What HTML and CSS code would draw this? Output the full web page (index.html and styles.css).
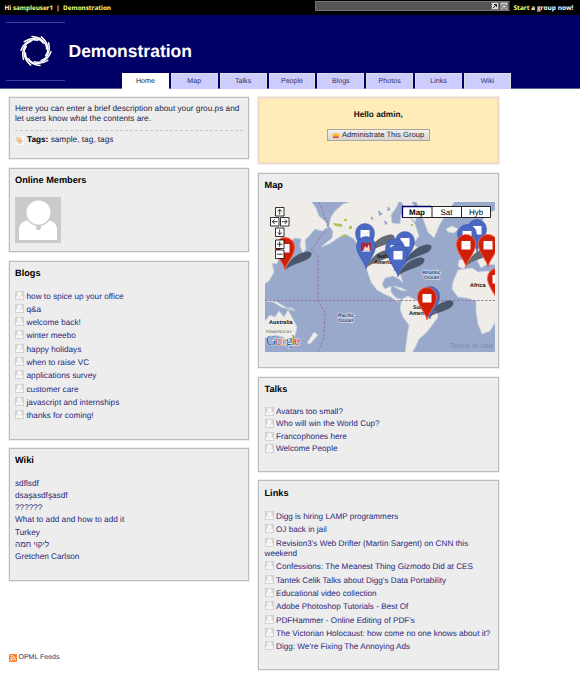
FILE: index.html
```html
<!DOCTYPE html>
<html lang="en">
<head>
<meta charset="utf-8">
<title>Demonstration</title>
<link rel="stylesheet" href="styles.css">
</head>
<body>
<svg width="0" height="0" class="defs">
  <defs>
    <symbol id="person" viewBox="0 0 46 46">
      <rect width="46" height="46" fill="#cbcbcb"/>
      <path d="M4 43V31q1-6 9-8l10 7 10-7q8 2 9 8v12z" fill="#fff"/>
      <circle cx="23.500" cy="15.500" r="13.500" fill="#cbcbcb"/>
      <circle cx="23.500" cy="15.500" r="12" fill="#fff"/>
      <path d="M21 28h5v3l-1 2h-3l-1-2z" fill="#cbcbcb"/>
    </symbol>
    <symbol id="mini" viewBox="0 0 9 9">
      <rect width="9" height="9" fill="#d3d3d3"/>
      <path d="M1 8V5.500l1.800-1L4.500 6l1.700-1.500 1.800 1V8z" fill="#f7f7f7"/>
      <circle cx="4.500" cy="3" r="2.300" fill="#f7f7f7"/>
    </symbol>
    <g id="pin">
      <path d="M0 0C-1-7-9.500-14-9.500-23a9.500 9.500 0 0 1 19 0C9.500-14 1-7 0 0z"/>
      <rect x="-4.500" y="-26" width="9" height="8.500" fill="#fff" stroke="none"/>
      <path d="M-3.500-24l3.500 3 3.500-3" fill="none" stroke="#ddd" stroke-width=".7"/>
    </g>
    <path id="shade" d="M0 0C3-8 10-16 20-18C27-20 29-15 23-11C16-7 7-6 0 0z"/>
    <pattern id="ground" width="7" height="7" patternUnits="userSpaceOnUse">
      <rect width="7" height="7" fill="#efeeeb"/>
      <path d="M1 2h1M4 1h1M5 5h1M2 5h1" stroke="#f0d9c4" stroke-width=".8"/>
    </pattern>
  </defs>
</svg>

<div class="topbar">
  <div class="hello">Hi <a>sampleuser1</a> &nbsp;|&nbsp; <a>Demonstration</a></div>
  <div class="search">
    <svg class="tool" viewBox="0 0 8 9"><rect x=".5" y=".5" width="7" height="7" fill="#ddd" stroke="#777"/><path d="M2 6l3.500-3.500M3 2.500h2.500V5" stroke="#222" fill="none"/></svg>
    <svg class="tool" viewBox="0 0 8 9"><rect x=".5" y=".5" width="7" height="7" fill="#ccc" stroke="#888"/><path d="M2 3h4v3H2z" stroke="#555" fill="#eee"/></svg>
  </div>
  <div class="start"><i>Start</i> a group now!</div>
</div>

<div class="header">
  <div class="logo">
    <svg width="34" height="34" viewBox="-17 -17 34 34">
      <circle r="17" fill="#00005a"/>
      <g fill="none" stroke="#fff" stroke-width="1.500" stroke-linecap="round">
        <g id="arc4">
          <path id="arc" d="M10.500-2C11-8 5-14-4-14.500"/>
          <use href="#arc" transform="rotate(36)"/>
          <use href="#arc" transform="rotate(72)"/>
          <use href="#arc" transform="rotate(108)"/>
          <use href="#arc" transform="rotate(144)"/>
        </g>
        <use href="#arc4" transform="rotate(180)"/>
      </g>
    </svg>
  </div>
  <h1>Demonstration</h1>
  <div class="tabs">
    <a class="tab on">Home</a><a class="tab">Map</a><a class="tab">Talks</a><a class="tab">People</a><a class="tab">Blogs</a><a class="tab">Photos</a><a class="tab">Links</a><a class="tab">Wiki</a>
  </div>
</div>

<div class="main">
  <div class="col left">
    <div class="card about">
      <p class="desc">Here you can enter a brief description about your grou.ps and<br>let users know what the contents are.</p>
      <p class="tags"><svg width="9" height="9" viewBox="0 0 9 9"><rect width="9" height="9" fill="#f8f8f8"/><path d="M1 1.500l3-.5 4 4-3 3-4-3.500z" fill="#f4dcc0" stroke="#cbb9a5" stroke-width=".6"/><path d="M3 3l3 3M5.500 3.500l-2 2" stroke="#f08a2c"/></svg><span><b>Tags:</b> sample, tag, tags</span></p>
    </div>
    <div class="card online">
      <h2>Online Members</h2>
      <svg class="avatar"><use href="#person"/></svg>
    </div>
    <div class="card blogs">
      <h2>Blogs</h2>
      <ul>
        <li><svg><use href="#mini"/></svg>how to spice up your office</li>
        <li><svg><use href="#mini"/></svg>q&amp;a</li>
        <li><svg><use href="#mini"/></svg>welcome back!</li>
        <li><svg><use href="#mini"/></svg>winter meebo</li>
        <li><svg><use href="#mini"/></svg>happy holidays</li>
        <li><svg><use href="#mini"/></svg>when to raise VC</li>
        <li><svg><use href="#mini"/></svg>applications survey</li>
        <li><svg><use href="#mini"/></svg>customer care</li>
        <li><svg><use href="#mini"/></svg>javascript and internships</li>
        <li><svg><use href="#mini"/></svg>thanks for coming!</li>
      </ul>
    </div>
    <div class="card wiki">
      <h2>Wiki</h2>
      <ul>
        <li>sdflsdf</li>
        <li>dsaşasdfşasdf</li>
        <li>??????</li>
        <li>What to add and how to add it</li>
        <li>Turkey</li>
        <li>ליקוי חמה</li>
        <li>Gretchen Carlson</li>
      </ul>
    </div>
    <div class="feeds"><svg width="8" height="8" viewBox="0 0 8 8"><rect width="8" height="8" rx="1" fill="#f5822e"/><circle cx="2.200" cy="5.800" r=".9" fill="#fff"/><path d="M1.500 3.500a3 3 0 0 1 3 3M1.500 1.500a5 5 0 0 1 5 5" fill="none" stroke="#fff" stroke-width=".9"/></svg><span>OPML Feeds</span></div>
  </div>

  <div class="col right">
    <div class="card admin">
      <b>Hello admin,</b>
      <a class="button"><svg width="8" height="7" viewBox="0 0 8 7"><path d="M0 1l2 1.500L4 .5l2 2L8 1 7 4.500H1z" fill="#f0b923"/><path d="M1 4.500h6V6H1z" fill="#d8392b"/></svg><span>Administrate This Group</span></a>
    </div>
    <div class="card mapcard">
      <h2>Map</h2>
      <svg class="map" width="230" height="150" viewBox="0 0 230 150">
        <rect width="230" height="150" fill="#99a9cc"/>
        <g fill="url(#ground)" stroke="#c4d0dc" stroke-width=".7">
          <path d="M-1-1H46L51 6 54 14 61 20 63 26 57 29 50 27 44 34 40 38 41 47 38 51 35 44 36 37 30 36 22 41 19 47 21 53 14 55 12 62 7 61 9 70 4 79-1 82z"/>
          <path d="M66 15L70 9 78 2 88-1H134L131 6 126 13 127 21 135 22 136 12 143 13 150 22 154 34 148 42 153 46 146 51 141 56 138 66 135 71 138 81 134 77 128 74 120 76 117 82 120 87 126 84 126 90 131 96 136 97 133 100 126 95 119 92 112 88 106 80 102 68 100 60 97 49 89 37 80 32 73 36 64 42 56 45 67 36 68 29 64 24z"/>
          <path d="M136-1H146L153 10 150 20 143 12zM151-1H190L183 9 175 22 169 36 163 30 158 17z"/>
          <path d="M181 27l6-3 6 3-4 4-6-1zM128 84l9 2 5 3-7-1z"/>
          <path d="M137 97L143 94 153 99 160 105 172 109 173 115 168 122 162 130 154 137 151 144 147 151H140L142 135 144 123 138 115 135 107z"/>
          <path d="M193 68L207 66 213 70 222 69 231 71V119L225 129 217 132 213 122 211 110 211 99 202 96 193 95 187 87 188 80z"/>
          <path d="M231 63L222 62 216 66 212 58 204 61 198 67 193 64 194 58 200 57 198 51 205 47 209 38 215 29 215 23 222 11 231 8z"/>
          <path d="M193 48l1-8 4-3 2 9z"/>
          <path d="M-1 120L5 113 10 115 14 109 19 115 23 108 28 117 32 125 30 134 24 139 18 135 9 133-1 136zM0 99l8 1 8 5 14 4-6-4 5 2-7-1-10-6-8-2z"/>
          <path d="M49 130l4 3-8 9-3-1z"/>
        </g>
        <g fill="#99a9cc"><path d="M113 8l5 4-4 2zM119 18l4 3-3 2zM106 14l3 3-3 1zM123 4l3 4-4 1zM118 50l4 2-3 2z"/></g>
        <g fill="#abc94f"><path d="M68 21l9 1v3l-7-1zM79 17h3v2h-3zM84 24h3v3h-3zM77 33h3v2h-3zM146 22h2v2h-2z"/></g>
        <path d="M54 0L63 23 60 29 46 48 53 54V99L60 111 59 136 53 150M0 98.500H230" fill="none" stroke="#9a6d97" stroke-width=".9" stroke-dasharray="2.500 1.500"/>
        <g fill="#24303f" opacity=".68">
          <use href="#shade" x="20" y="68"/><use href="#shade" x="101" y="66"/><use href="#shade" x="103" y="51"/><use href="#shade" x="133" y="74"/><use href="#shade" x="140" y="61"/><use href="#shade" x="162" y="117"/><use href="#shade" x="201" y="64"/><use href="#shade" x="212" y="54"/>
        </g>
        <g class="place"><text x="112" y="56">North</text><text x="109" y="62">America</text><text x="148" y="107">South</text><text x="144" y="113">America</text><text x="205" y="85">Africa</text><text x="4" y="122">Australia</text></g>
        <g class="place sea"><text x="157" y="71.500">Atlantic</text><text x="159" y="76.500">Ocean</text><text x="73" y="114.500">Pacific</text><text x="73" y="119.500">Ocean</text></g>
        <g fill="#4b69c3" stroke="#2e4fa6" stroke-width=".5">
          <use href="#pin" x="100" y="54"/><use href="#pin" x="101" y="67"/>
          <use href="#pin" x="140" y="62"/><use href="#pin" x="130" y="69"/><use href="#pin" x="133" y="75"/>
          <use href="#pin" x="212" y="50"/><use href="#pin" x="202" y="55"/><use href="#pin" x="165" y="117"/>
        </g>
        <path d="M96 41h10v8H96z" fill="#af2738"/><path d="M98 49l2-5 2 2 2-4 1 7z" fill="#e8d6d4"/>
        <g fill="#cf2007" stroke="#ff5a3c" stroke-width=".9">
          <use href="#pin" x="20" y="68"/><use href="#pin" x="162" y="118"/><use href="#pin" x="201" y="65"/><use href="#pin" x="223" y="65"/><use href="#pin" x="232" y="99"/>
        </g>
        <g fill="#fff" stroke="#000" stroke-width=".8">
          <path d="M10.500 5.500h8.500v8.500h-8.500zM5.500 15.500h8.500v8.500h-8.500zM15.500 15.500h8.500v8.500h-8.500zM10.500 26h8.500v8.500h-8.500zM10.500 38h8.500v8.500h-8.500zM10.500 48h8.500v8.500h-8.500z"/>
          <path d="M14.700 12.500v-5M12.500 9.500l2.200-2 2.200 2M12.500 19.700h-5M9.500 17.500l-2 2.200 2 2.200M17 19.700h5M20 17.500l2 2.200-2 2.200M14.700 27.500v5M12.500 30.500l2.200 2 2.200-2M12 42.200h5.500M14.700 39.500v5.500M12 52.200h5.500" fill="none"/>
        </g>
        <g fill="#fff" stroke="#222" stroke-width="1"><path d="M137.500 4.500h88v11h-88zM167 4.500v11M196.500 4.500v11"/></g>
        <path d="M137.500 15.500v-11h29" fill="none" stroke="#00006a" stroke-width="1.300"/>
        <g class="types"><text x="152" y="12.800" font-weight="bold">Map</text><text x="181.500" y="12.800">Sat</text><text x="211" y="12.800">Hyb</text></g>
        <text class="powered" x="1" y="131">POWERED BY</text>
        <text class="google" x="1" y="142.500" textLength="34"><tspan fill="#2452b8">G</tspan><tspan fill="#c93430">o</tspan><tspan fill="#d7a41c">o</tspan><tspan fill="#2452b8">g</tspan><tspan fill="#2f9a45">l</tspan><tspan fill="#c93430">e</tspan></text>
        <text class="terms" x="185" y="145.500" textLength="43">Terms of Use</text>
      </svg>
    </div>
    <div class="card talks">
      <h2>Talks</h2>
      <ul>
        <li><svg><use href="#mini"/></svg>Avatars too small?</li>
        <li><svg><use href="#mini"/></svg>Who will win the World Cup?</li>
        <li><svg><use href="#mini"/></svg>Francophones here</li>
        <li><svg><use href="#mini"/></svg>Welcome People</li>
      </ul>
    </div>
    <div class="card links">
      <h2>Links</h2>
      <ul>
        <li><svg><use href="#mini"/></svg>Digg is hiring LAMP programmers</li>
        <li><svg><use href="#mini"/></svg>OJ back in jail</li>
        <li class="wrap"><svg><use href="#mini"/></svg>Revision3's Web Drifter (Martin Sargent) on CNN this<br><span>weekend</span></li>
        <li><svg><use href="#mini"/></svg>Confessions: The Meanest Thing Gizmodo Did at CES</li>
        <li><svg><use href="#mini"/></svg>Tantek Celik Talks about Digg's Data Portability</li>
        <li><svg><use href="#mini"/></svg>Educational video collection</li>
        <li><svg><use href="#mini"/></svg>Adobe Photoshop Tutorials - Best Of</li>
        <li><svg><use href="#mini"/></svg>PDFHammer - Online Editing of PDF's</li>
        <li><svg><use href="#mini"/></svg>The Victorian Holocaust: how come no one knows about it?</li>
        <li><svg><use href="#mini"/></svg>Digg: We're Fixing The Annoying Ads</li>
      </ul>
    </div>
  </div>
</div>
</body>
</html>
```
FILE: styles.css
```css
* { box-sizing: border-box; }
body {
  margin: 0;
  width: 580px;
  height: 678px;
  overflow: hidden;
  background: #fff;
  color: #26264a;
  font: 8.16px/10.2px "Liberation Sans", Arial, sans-serif;
  text-rendering: geometricPrecision;
}
.defs { position: absolute; }
h1, h2, p, ul { margin: 0; padding: 0; }
ul { list-style: none; }

.topbar {
  display: flex;
  height: 15px;
  background: #000;
  color: #fff;
  font: bold 6.5px/15px "Open Sans", sans-serif;
}
.topbar a, .topbar i { color: #ffff80; font-style: normal; }
.hello { width: 315px; padding-left: 4.500px; font-size: 6.300px; white-space: nowrap; }
.search {
  display: flex;
  flex: none;
  justify-content: flex-end;
  gap: 1px;
  width: 195px;
  height: 10px;
  margin: 1px 4px 0 0;
  padding-right: 1px;
  background: #555;
  border: 1px solid #74747e;
  border-right-color: #333;
}
.tool { width: 8px; height: 9px; }
.start { white-space: nowrap; margin-left: -.5px; }

.header {
  display: grid;
  grid-template-columns: 68.500px 1fr;
  grid-template-rows: 58px 16px;
  height: 74px;
  background: #000066;
  border-bottom: 1px solid #5a6596;
}
.logo {
  display: flex;
  align-items: center;
  justify-content: center;
  width: 59px;
  height: 59px;
  margin: 7px 0 0 6px;
  padding-bottom: 1px;
  border: solid #40409a;
  border-width: 1px 0;
}
.header h1 {
  align-self: center;
  margin-top: 14px;
  color: #fff;
  font-size: 17.500px;
  line-height: 20px;
}
.tabs { display: flex; grid-column: 1 / 3; gap: 2px; padding-left: 122px; }
.tab {
  width: 46.850px;
  height: 16px;
  background: #ccccff;
  border: 1px solid #dcdcdc;
  border-bottom-color: #ccccff;
  color: #333366;
  font-size: 7.1px;
  line-height: 14px;
  text-align: center;
}
.tab.on { background: #fff; border-color: #fff; color: #223; }

.main { display: flex; gap: 9px; padding: 8px 0 0 8.500px; }
.col { display: flex; flex-direction: column; width: 240.500px; gap: 8.500px; }
.card {
  flex: none;
  padding: 6px 5.500px 0;
  background: #ededed;
  border: 1px solid #bdbdbd;
  box-shadow: 0 0 0 .5px #ddd;
}
.card h2 { color: #000; font-size: 9.200px; line-height: 10px; }
.card ul { color: #29297a; white-space: nowrap; }
.card li { height: 13.330px; }
li svg { width: 9px; height: 9px; margin-right: 2.500px; vertical-align: -1px; }

.about { height: 62px; font-size: 8.240px; white-space: nowrap; }
.desc { padding-bottom: 6px; border-bottom: 1px dashed #c8c8c8; }
.tags { display: flex; align-items: center; gap: 3px; margin-top: 4px; }
.tags b { color: #000; }
.online { height: 84.500px; }
.avatar { display: block; width: 46px; height: 46px; margin-top: 12.500px; }
.blogs { height: 179px; }
.blogs ul { margin-top: 13px; font-size: 8.220px; }
.wiki { height: 133px; }
.wiki ul { margin-top: 13.500px; font-size: 8.220px; }
.wiki li, .talks li { height: 12.250px; }
.talks li svg { vertical-align: -2px; }
.feeds {
  display: flex;
  align-items: center;
  gap: 2px;
  margin-top: 63px;
  color: #333366;
  font-size: 7px;
}

.admin {
  display: flex;
  flex-direction: column;
  align-items: center;
  height: 67px;
  padding-top: 10.500px;
  background: #ffecb9;
  border: 2px solid #f0dcc8;
  color: #222;
}
.admin b { color: #111; font-size: 8.250px; }
.button {
  display: flex;
  align-items: center;
  gap: 2px;
  width: 103px;
  height: 12px;
  margin-top: 9.500px;
  padding: 0 4.500px;
  background: linear-gradient(#f4f1ee, #d9d4ce);
  border: 1px solid #aaa6a2;
  color: #222240;
  font-size: 7.650px;
  white-space: nowrap;
}
.mapcard { height: 195.500px; }
.map { display: block; margin-top: 12px; }
.talks { height: 95px; }
.talks ul { margin-top: 13.500px; }
.links { height: 190px; padding-top: 7px; }
.links ul { margin-top: 13px; }
.links .wrap { height: 23.600px; }

.place { font-size: 5.500px; font-weight: bold; fill: #111; }
.sea { fill: #223a7a; stroke: #d7e0ee; stroke-width: 1.500px; paint-order: stroke; font-size: 5px; }
.types { font-size: 8px; fill: #000; text-anchor: middle; }
.powered { font-size: 3.800px; fill: #555; }
.google { font: 14px "Liberation Serif", serif; stroke: #fff; stroke-width: .8px; paint-order: stroke; }
.terms { font-size: 6.800px; fill: #7186ac; }
```
